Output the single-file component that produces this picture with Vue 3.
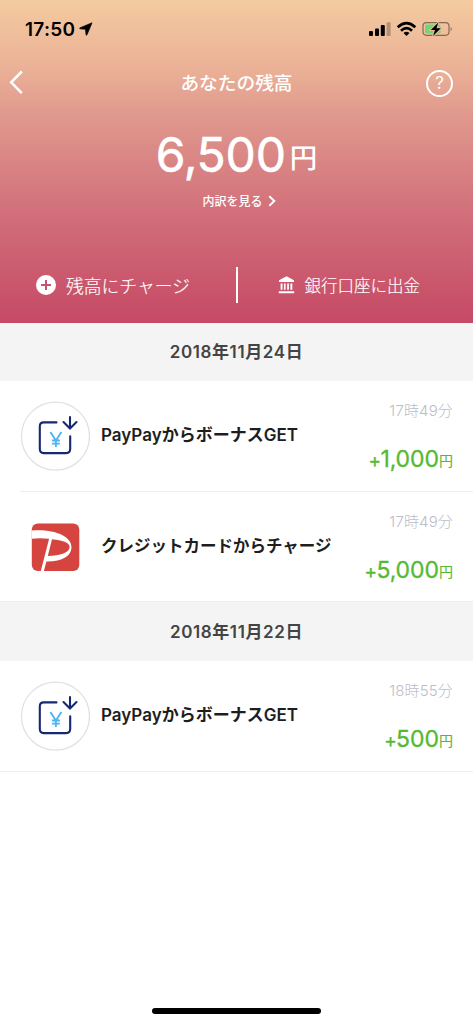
<script setup>
const groups = [
  {
    date: '2018年11月24日',
    items: [
      { kind: 'bonus', title: 'PayPayからボーナスGET', time: '17時49分', amount: '1,000' },
      { kind: 'charge', title: 'クレジットカードからチャージ', time: '17時49分', amount: '5,000' },
    ],
  },
  {
    date: '2018年11月22日',
    items: [{ kind: 'bonus', title: 'PayPayからボーナスGET', time: '18時55分', amount: '500' }],
  },
]
</script>

<template>
  <div class="screen">
    <header class="hero">
      <div class="status">
        <span class="clock">17:50</span>
        <svg class="loc" width="14" height="14" viewBox="0 0 14 14"><path d="M13 .8 L.8 5.900 Q.3 6.400 1 6.800 L6.500 7.300 L7 12.800 Q7.400 13.600 8 12.800 Z" fill="#000" stroke="#000" stroke-width=".7" stroke-linejoin="round" /></svg>
        <svg class="sys" width="88" height="18" viewBox="0 0 88 18">
          <rect x="1" y="11" width="4" height="5" rx="1" />
          <rect x="7" y="8.5" width="4" height="7.5" rx="1" />
          <rect x="12.8" y="5" width="4" height="11" rx="1" />
          <rect x="18.6" y="2.3" width="4" height="13.7" rx="1" opacity=".25" />
          <g fill="none" stroke="#000" stroke-width="2.7">
            <path d="M29.7 7.2 Q38.5 -.9 47.3 7.2" />
            <path d="M33 10.7 Q38.500 5.4 44 10.7" />
          </g>
          <path d="M35.500 12.900 Q38.500 10.500 41.500 12.900 L38.500 15.900 Z" />
          <rect x="55" y="2.700" width="26" height="12.600" rx="3.500" fill="none" stroke="#000" stroke-opacity=".45" stroke-width="1.200" />
          <path d="M82.700 6.700 q2.200 2.300 0 4.600 z" opacity=".45" />
          <rect x="57" y="4.600" width="15.500" height="8.800" rx="1.500" fill="#70d872" />
          <path d="M70.300 2.400 L62.800 9.900 H67 L65 16 L72.800 8.200 H68.500 Z" stroke="#edb798" stroke-width="2" paint-order="stroke" />
        </svg>
      </div>
      <div class="nav">
        <svg class="back" width="14" height="26" viewBox="0 0 14 26"><path d="M12.800 1.500 L2.200 12.300 L12.800 23.100" fill="none" stroke="#fff" stroke-width="2.500" /></svg>
        <h1 class="heading">あなたの残高</h1>
        <span class="help">?</span>
      </div>
      <div class="balance"><span class="num">6,500</span><span class="yen">円</span></div>
      <div class="detail">
        <span>内訳を見る</span>
        <svg width="8" height="12" viewBox="0 0 8 12"><path d="M1.300 1.200 L6.300 6 L1.300 10.800" fill="none" stroke="#fff" stroke-width="2" /></svg>
      </div>
      <div class="actions">
        <div class="action charge">
          <svg width="20" height="20" viewBox="0 0 20 20"><circle cx="10" cy="10" r="10" fill="#fff" /><path d="M5 10 H15 M10 5 V15" stroke="#ca536c" stroke-width="2" /></svg>
          <span>残高にチャージ</span>
        </div>
        <i class="bar"></i>
        <div class="action payout">
          <svg width="17" height="18" viewBox="0 0 17 18" fill="#fff"><path d="M8.500 .3 L16 4.200 V6 H1 V4.200 Z M2.600 7.500 h1.900 v6.300 h-1.900 z M5.900 7.500 h1.700 v6.300 h-1.700 z M9.200 7.500 h1.700 v6.300 h-1.700 z M12.400 7.500 h1.900 v6.300 h-1.900 z M.8 15.300 H16.200 V17.300 H.8 Z" /></svg>
          <span>銀行口座に出金</span>
        </div>
      </div>
    </header>

    <main>
      <section v-for="(g, gi) in groups" :key="gi">
        <h2 class="date" :class="{ later: gi > 0 }">{{ g.date }}</h2>
        <ul class="list">
          <li v-for="(t, i) in g.items" :key="i" class="row">
            <svg v-if="t.kind === 'bonus'" class="icon" width="70" height="70" viewBox="0 0 70 70">
              <circle cx="35.500" cy="35.200" r="34" fill="#fff" stroke="#e0e0e2" stroke-width="1.200" />
              <g transform="translate(0 -.9)" fill="none">
                <g stroke="#14296f" stroke-width="2.100" stroke-linecap="round">
                  <path d="M36.500 22.300 H23.700 Q19.800 22.300 19.800 26.200 V49 Q19.800 53 23.700 53 H46.200 Q50.200 53 50.200 49 V36.300" />
                  <path d="M50 17 V28.400 M43.500 21.900 L50 28.400 L56.500 21.900" />
                </g>
                <path d="M30.400 31.800 L35.900 40.400 L41.400 31.800 M35.900 40.400 V47 M31.900 40.400 H39.900 M31.900 43.500 H39.900" stroke="#4db5f2" stroke-width="1.900" />
              </g>
            </svg>
            <svg v-else class="icon" width="70" height="70" viewBox="-.8 -.5 70 70">
              <rect x="11" y="11" width="47.500" height="47.500" rx="6" fill="#d5443f" />
              <path fill="#fff" fill-rule="evenodd" d="M11 18 C32 16.200 50.700 23 50.700 34.800 C50.700 43.500 41.500 49.300 25.600 49.100 L23.100 58.500 H20 L28.300 26.300 C22.600 25.500 16.700 25.400 11 26.200 Z M31.200 26.800 L27 43.500 C39.500 43.200 48.800 40.200 48.800 34.500 C48.800 30 41.500 27.800 31.200 26.800 Z" />
            </svg>
            <span class="title" :class="t.kind">{{ t.title }}</span>
            <div class="meta">
              <span class="time">{{ t.time }}</span>
              <span class="amount"><b class="plus">+</b>{{ t.amount }}<small>円</small></span>
            </div>
          </li>
        </ul>
      </section>
    </main>
    <div class="home"></div>
  </div>
</template>

<style>
body { margin: 0; background: #fff; }
</style>

<style scoped>
.screen {
  width: 473px;
  height: 1024px;
  display: flex;
  flex-direction: column;
  background: #fff;
  overflow: hidden;
  font-family: Inter, "Noto Sans CJK JP", sans-serif;
}
.hero {
  height: 323px;
  flex: none;
  display: flex;
  flex-direction: column;
  color: #fff;
  background: linear-gradient(#f4cba0 0%, #eab096 22%, #e19b8e 34%, #d16e7a 67%, #c64965 100%);
}
.status { height: 58px; display: flex; align-items: center; padding: 0 17px 0 25px; }
.clock { color: #000; font-size: 19px; font-weight: 600; line-height: 22px; letter-spacing: .3px; padding-top: 1px; }
.loc { margin-left: 4px; }
.sys { margin-left: auto; }
.nav { height: 50px; display: flex; align-items: center; justify-content: space-between; padding: 0 20px 0 9px; }
.heading { margin: 2px 0 0 24px; font-size: 18.700px; font-weight: 500; line-height: 28px; }
.help {
  box-sizing: border-box;
  width: 27px;
  height: 27px;
  border: 2px solid #fff;
  border-radius: 50%;
  text-align: center;
  font-size: 17px;
  line-height: 23px;
}
.balance { height: 94px; display: flex; justify-content: center; align-items: baseline; line-height: 93px; }
.num { font-size: 48px; font-weight: 400; letter-spacing: -.2px; -webkit-text-stroke: .6px #fff; }
.yen { font-size: 27.500px; font-weight: 500; line-height: 40px; margin-left: 4px; position: relative; top: -4px; }
.detail { display: flex; justify-content: center; align-items: center; gap: 5px; height: 18px; margin-top: -10px; padding-left: 5px; font-size: 12px; font-weight: 500; }
.detail span { margin-top: -1px; }
.actions { display: flex; align-items: center; height: 36px; margin-top: 57px; }
.action { display: flex; align-items: center; font-weight: 300; white-space: nowrap; }
.action span { margin-top: -1px; -webkit-text-stroke: .15px #fff; }
.charge { width: 200px; padding-left: 36px; gap: 10px; font-size: 17.800px; }
.payout { padding-left: 40.500px; gap: 9.500px; font-size: 16.500px; }
.bar { width: 1.500px; height: 36px; background: #fff; }
.date {
  box-sizing: border-box;
  height: 58px;
  margin: 0;
  background: #f4f4f5;
  color: #444;
  text-align: center;
  font-size: 17px;
  font-weight: 600;
  line-height: 59px;
  letter-spacing: .6px;
}
.later { height: 59px; line-height: 61px; }
.list { list-style: none; margin: 0; padding: 0; }
.row {
  box-sizing: border-box;
  height: 110.500px;
  display: flex;
  position: relative;
  padding: 20px 20px 0;
}
.row::after { content: ""; position: absolute; left: 20px; right: 0; bottom: 0; height: 1px; background: #eeeeef; }
.row:last-child::after { left: 0; }
.icon { flex: none; }
.title { margin-left: 11px; height: 26px; margin-top: 21px; line-height: 26px; font-size: 17px; font-weight: 600; color: #1e1e20; white-space: nowrap; }
.title.charge { width: auto; padding: 0; font-size: 16.500px; }
.meta { margin-left: auto; display: flex; flex-direction: column; align-items: flex-end; white-space: nowrap; }
.time { font-size: 15px; font-weight: 300; line-height: 20px; letter-spacing: .15px; color: #bcbdc8; }
.amount { margin-top: 21px; font-size: 23px; font-weight: 400; line-height: 34px; letter-spacing: -.1px; color: #56b932; -webkit-text-stroke: .3px #56b932; }
.plus { font-size: 19px; font-weight: 400; letter-spacing: -.6px; }
.amount small { font-size: 14px; letter-spacing: 0; position: relative; top: -1px; margin-left: .2px; -webkit-text-stroke: .1px #56b932; }
.home { width: 169px; height: 6px; border-radius: 3px; margin: auto auto 10.500px; background: #000; }
</style>
